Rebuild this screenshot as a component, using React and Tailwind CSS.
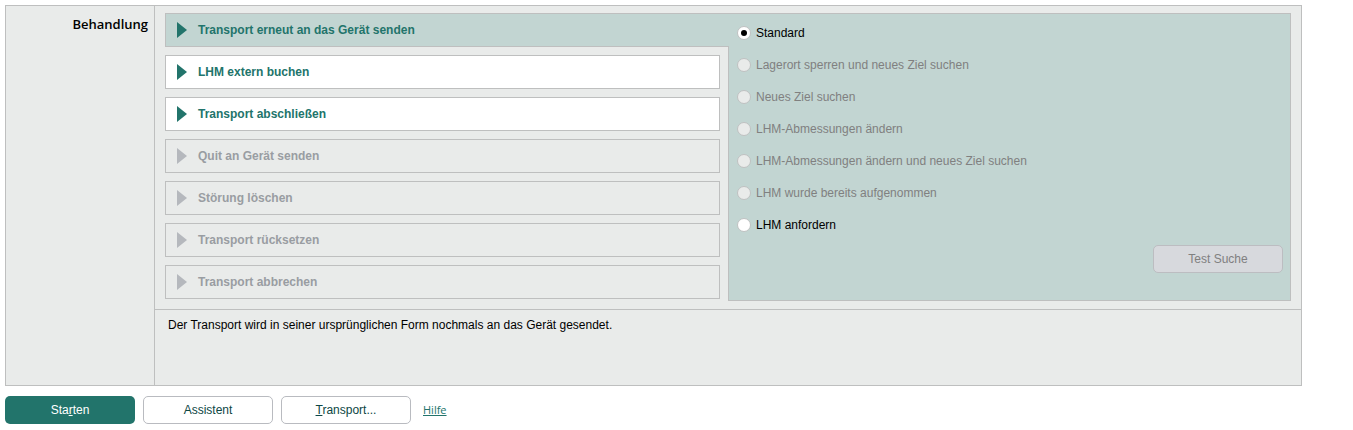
import { useState } from "react";

const actions = [
  { label: "Transport erneut an das Gerät senden", state: "active" },
  { label: "LHM extern buchen", state: "enabled" },
  { label: "Transport abschließen", state: "enabled" },
  { label: "Quit an Gerät senden", state: "disabled" },
  { label: "Störung löschen", state: "disabled" },
  { label: "Transport rücksetzen", state: "disabled" },
  { label: "Transport abbrechen", state: "disabled" },
];

const actionStyles = {
  active: "relative z-10 -mr-[9px] border-r-0 bg-[#c2d5d2] text-[#22746b]",
  enabled: "bg-white text-[#22746b]",
  disabled: "text-[#999da2]",
};

const options = [
  { label: "Standard" },
  { label: "Lagerort sperren und neues Ziel suchen", disabled: true },
  { label: "Neues Ziel suchen", disabled: true },
  { label: "LHM-Abmessungen ändern", disabled: true },
  { label: "LHM-Abmessungen ändern und neues Ziel suchen", disabled: true },
  { label: "LHM wurde bereits aufgenommen", disabled: true },
  { label: "LHM anfordern" },
];

function Action({ label, state }) {
  return (
    <button
      type="button"
      disabled={state === "disabled"}
      className={`flex h-[34px] items-center gap-[11px] border border-[#bebfbf] pl-[11px] text-left font-bold ${actionStyles[state]}`}
    >
      <svg
        width="10"
        height="16"
        viewBox="0 0 10 16"
        aria-hidden="true"
        className={state === "disabled" ? "text-[#b5b8bd]" : "text-[#22746b]"}
      >
        <path d="M0 0 L10 8 L0 16 Z" fill="currentColor" />
      </svg>
      {label}
    </button>
  );
}

function Option({ label, disabled, checked, onChange }) {
  return (
    <label
      className={`flex h-8 items-center gap-[5px] ${disabled ? "text-[#808080]" : "text-black"}`}
    >
      <input
        type="radio"
        name="variante"
        checked={checked}
        disabled={disabled}
        onChange={onChange}
        className="grid size-[14px] appearance-none place-items-center rounded-full border border-[#bfc1c1] bg-white before:size-[6px] before:rounded-full checked:before:bg-black disabled:bg-[#e9ebea]"
      />
      {label}
    </label>
  );
}

export default function App() {
  const [selected, setSelected] = useState("Standard");

  return (
    <main className="pt-[5px] pr-[51px] pl-[5px] font-['Liberation_Sans',Arial,sans-serif] text-[12px] leading-4 text-black">
      <section className="flex border border-[#bebfbf] bg-[#e9ebea]">
        <h2 className="w-[149px] shrink-0 border-r border-[#bebfbf] pt-[10px] pr-[6px] text-right font-['Open_Sans','Noto_Sans',sans-serif] text-[13px] font-semibold">
          Behandlung
        </h2>
        <div className="min-w-0 flex-1">
          <div className="flex gap-2 px-[10px] pt-[7px] pb-2">
            <div className="flex w-[555px] shrink-0 flex-col gap-2">
              {actions.map((a) => (
                <Action key={a.label} {...a} />
              ))}
            </div>
            <div className="flex flex-1 flex-col border border-[#bebfbf] bg-[#c2d5d2] pt-[3px] pr-[7px] pb-[27px] pl-2">
              {options.map((o) => (
                <Option
                  key={o.label}
                  {...o}
                  checked={selected === o.label}
                  onChange={() => setSelected(o.label)}
                />
              ))}
              <button
                type="button"
                disabled
                className="mt-1 h-7 w-[130px] self-end rounded-[5px] border border-[#bcbdc1] bg-[#d7d9dd] text-[#808080]"
              >
                Test Suche
              </button>
            </div>
          </div>
          <p className="h-[76px] border-t border-[#bebfbf] px-[13px] pt-[7px]">
            Der Transport wird in seiner ursprünglichen Form nochmals an das Gerät gesendet.
          </p>
        </div>
      </section>
      <div className="flex items-center gap-2 pt-[10px]">
        <button type="button" className="h-7 w-[130px] rounded-[5px] bg-[#22746b] text-white">
          Sta<u>r</u>ten
        </button>
        <button
          type="button"
          className="h-7 w-[130px] rounded-[5px] border border-[#b9bbc0] bg-white text-[#0d4644]"
        >
          Assistent
        </button>
        <button
          type="button"
          className="h-7 w-[130px] rounded-[5px] border border-[#b9bbc0] bg-white text-[#0d4644]"
        >
          <u>T</u>ransport...
        </button>
        <a
          href="#hilfe"
          className="ml-1 font-['Open_Sans','Noto_Sans',sans-serif] text-[11px] text-[#22746b] underline"
        >
          Hilfe
        </a>
      </div>
    </main>
  );
}
